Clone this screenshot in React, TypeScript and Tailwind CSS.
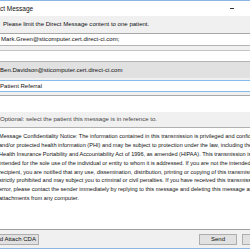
import React from "react";

const lines = [
  "Message Confidentiality Notice: The information contained in this transmission is privileged and confidential",
  "and/or protected health information (PHI) and may be subject to protection under the law, including the",
  "Health Insurance Portability and Accountability Act of 1996, as amended (HIPAA). This transmission is",
  "intended for the sole use of the individual or entity to whom it is addressed. If you are not the intended",
  "recipient, you are notified that any use, dissemination, distribution, printing or copying of this transmission is",
  "strictly prohibited and may subject you to criminal or civil penalties. If you have received this transmission in",
  "error, please contact the sender immediately by replying to this message and deleting this message and",
  "attachments from any computer.",
];

export default function App() {
  return (
    <div
      className="w-[250px] h-[250px] overflow-hidden bg-white flex flex-col text-[6.05px] leading-[9px] text-[#111]"
      style={{ fontFamily: '"Liberation Sans", Arial, sans-serif' }}
    >
      <div className="h-px bg-[#8ab8e6] shrink-0" />
      <div className="h-[15px] shrink-0 flex items-center justify-between bg-white">
        <span className="ml-[-12px] text-[6.5px] whitespace-nowrap">Direct Message</span>
        <span className="w-[4px] h-px bg-[#333] mr-[16px]" />
      </div>
      <div className="h-[17px] shrink-0 bg-[#f0f0f0] flex items-center pl-[3px] whitespace-nowrap">
        Please limit the Direct Message content to one patient.
      </div>
      <div className="h-px bg-[#a8a8a8] shrink-0" />
      <div className="h-[11px] shrink-0 bg-white flex items-center pl-[1px] whitespace-nowrap">
        Mark.Green@sticomputer.cert.direct-ci.com;
      </div>
      <div className="h-px bg-[#b4b4b4] shrink-0" />
      <div className="h-[4px] bg-[#f0f0f0] shrink-0" />
      <div className="h-px bg-[#c4c4c4] shrink-0" />
      <div className="h-[10px] bg-white shrink-0" />
      <div className="h-px bg-[#b4b4b4] shrink-0" />
      <div className="h-[16px] shrink-0 bg-[#e1e1e1] flex items-center whitespace-nowrap">
        Ben.Davidson@sticomputer.cert.direct-ci.com
      </div>
      <div className="h-[2px] bg-[#f0f0f0] shrink-0" />
      <div className="h-px bg-[#86bbeb] shrink-0" />
      <div className="h-[10px] shrink-0 bg-white flex items-center whitespace-nowrap">
        Patient Referral
      </div>
      <div className="h-px bg-[#86bbeb] shrink-0" />
      <div className="h-[3px] bg-[#f0f0f0] shrink-0" />
      <div className="h-px bg-[#a8a8a8] shrink-0" />
      <div className="h-[16px] bg-white shrink-0" />
      <div className="h-[15px] shrink-0 bg-[#f0f0f0] flex items-center whitespace-nowrap text-[#444]">
        Optional: select the patient this message is in reference to.
      </div>
      <div className="h-px bg-[#b0b0b0] shrink-0" />
      <div className="flex-1 bg-white pt-[4px] ml-[-1px] whitespace-nowrap text-[5.6px]">
        {lines.map((l) => (
          <div key={l} className="h-[8.9px] leading-[8.9px]">{l}</div>
        ))}
      </div>
      <div className="h-px bg-[#a0a0a0] shrink-0" />
      <div className="h-[18px] shrink-0 bg-[#f0f0f0] flex items-center">
        <div className="h-[11px] w-[80px] shrink-0 ml-[-41px] border border-[#adadad] bg-[#e1e1e1] flex items-center justify-end pr-[2px] whitespace-nowrap">
          Build Attach CDA
        </div>
        <div className="h-[11px] w-[38px] shrink-0 ml-[160px] border border-[#adadad] bg-[#e1e1e1] flex items-center justify-center">
          Send
        </div>
        <div className="h-[11px] w-[38px] shrink-0 ml-[5px] border border-[#adadad] bg-[#e1e1e1] flex items-center justify-center">
          Cancel
        </div>
      </div>
      <div className="h-px bg-[#8ab8e6] shrink-0" />
      <div className="h-px bg-white shrink-0" />
    </div>
  );
}
